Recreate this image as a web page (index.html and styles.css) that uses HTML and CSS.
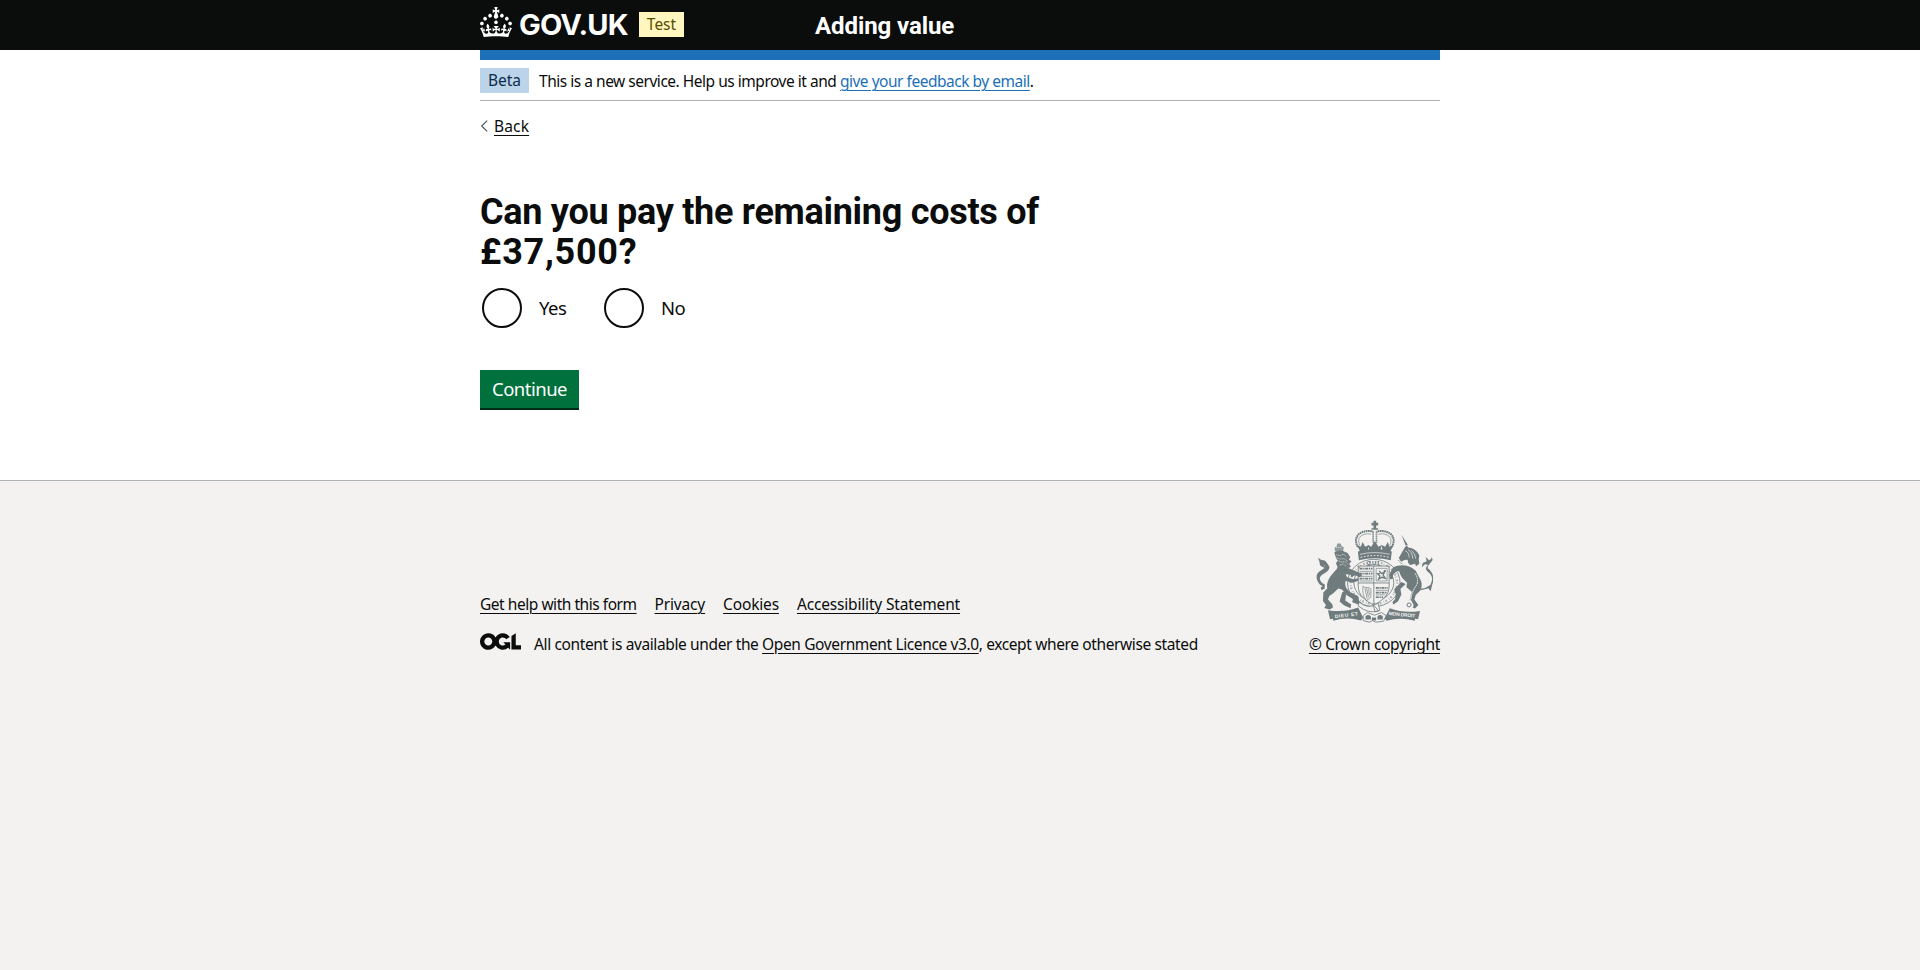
FILE: index.html
```html
<!DOCTYPE html>
<html lang="en">
<head>
<meta charset="utf-8">
<title>Can you pay the remaining costs of £37,500?</title>
<link rel="stylesheet" href="styles.css">
</head>
<body>
<header class="header">
  <div class="container header-row">
    <div class="header-logo">
      <svg class="crown" viewBox="0 0 32 30" width="32" height="30" aria-hidden="true"><path fill="#fff" d="M22.6 10.4c-1 .4-2-.1-2.4-1-.4-.9.1-2 1-2.4.9-.4 2 .1 2.4 1s-.1 2-1 2.4m-5.9 6.7c-.9.4-2-.1-2.4-1-.4-.9.1-2 1-2.4.9-.4 2 .1 2.4 1s-.1 2-1 2.4m10.8-3.7c-1 .4-2-.1-2.4-1-.4-.9.1-2 1-2.4.9-.4 2 .1 2.4 1s0 2-1 2.4m3.3 4.8c-1 .4-2-.1-2.4-1-.4-.9.1-2 1-2.4.9-.4 2 .1 2.4 1s-.1 2-1 2.4M17 4.7l2.3 1.2V2.5l-2.3.7-.2-.2.9-3h-3.4l.9 3-.2.2c-.1.1-2.3-.7-2.3-.7v3.4L15 4.7c.1.1.1.2.2.2l-1.3 4c-.1.2-.1.4-.1.6 0 1.1.8 2 1.9 2.2h.7c1-.2 1.9-1.1 1.9-2.1 0-.2 0-.4-.1-.6l-1.3-4c-.1-.2 0-.2.1-.3m-7.6 5.7c.9.4 2-.1 2.4-1 .4-.9-.1-2-1-2.4-.9-.4-2 .1-2.4 1s0 2 1 2.4m-5 3c.9.4 2-.1 2.4-1 .4-.9-.1-2-1-2.4-.9-.4-2 .1-2.4 1s.1 2 1 2.4m-3.2 4.8c.9.4 2-.1 2.4-1 .4-.9-.1-2-1-2.4-.9-.4-2 .1-2.4 1s0 2 1 2.4m14.8 11c4.4 0 8.6.3 12.3.8 1.1-4.5 2.4-7 3.7-8.8l-2.5-.9c.2 1.3.3 1.9 0 2.7-.4-.4-.8-1.1-1.1-2.3l-1.2 4c.7-.5 1.3-.8 2-.9-1.1 2.5-2.6 3.1-3.5 3-1.1-.2-1.7-1.2-1.5-2.1.3-1.2 1.5-1.5 2.1-.1 1.1-2.3-.8-3-2-2.3 1.9-1.9 2.1-3.5.6-5.6-2.1 1.6-2.1 3.2-1.2 5.5-1.2-1.4-3.2-.6-2.5 1.6.9-1.4 2.1-.5 1.9.8-.2 1.1-1.7 2.1-3.5 1.9-2.7-.2-2.9-2.1-2.9-3.6.7-.1 1.9.5 2.9 1.9l.4-4.3c-1.1 1.1-2.1 1.4-3.2 1.4.4-1.2 2.1-3 2.1-3h-5.4s1.7 1.9 2.1 3c-1.1 0-2.1-.2-3.2-1.4l.4 4.3c1-1.4 2.2-2 2.9-1.9-.1 1.5-.2 3.4-2.9 3.6-1.9.2-3.4-.8-3.5-1.9-.2-1.3 1-2.2 1.9-.8.7-2.3-1.2-3-2.5-1.6.9-2.2.9-3.9-1.2-5.5-1.5 2-1.3 3.7.6 5.6-1.2-.7-3.1 0-2 2.3.6-1.4 1.8-1.1 2.1.1.2.9-.3 1.9-1.5 2.1-.9.2-2.4-.5-3.5-3 .6 0 1.2.3 2 .9l-1.2-4c-.3 1.1-.7 1.9-1.1 2.3-.3-.8-.2-1.4 0-2.7l-2.9.9C1.3 23 2.6 25.5 3.7 30c3.7-.5 7.9-.8 12.3-.8"/></svg>
      <span class="wordmark">GOV.UK</span>
      <span class="tag tag-yellow">Test</span>
    </div>
    <div class="service-name">Adding value</div>
  </div>
</header>
<div class="page">
  <div class="container">
    <div class="blue-bar"></div>
    <div class="phase">
      <span class="tag tag-blue">Beta</span>
      <span class="phase-text">This is a new service. Help us improve it and <a class="link link-blue" href="#">give your feedback by email</a>.</span>
    </div>
    <a class="back" href="#"><svg class="chevron" viewBox="0 0 8 12" width="8" height="12" aria-hidden="true"><path d="M7.2 .6L1.7 6 7.2 11.4" fill="none" stroke="#505a5f" stroke-width="1.2"/></svg><span class="link back-text">Back</span></a>
    <main class="main">
      <h1 class="heading">Can you pay the remaining costs of <span class="amount">£37,500?</span></h1>
      <div class="radios">
        <label class="radio"><input class="radio-input" type="radio" name="pay"><span class="radio-label">Yes</span></label>
        <label class="radio"><input class="radio-input" type="radio" name="pay"><span class="radio-label">No</span></label>
      </div>
      <button class="button" type="button">Continue</button>
    </main>
  </div>
</div>
<footer class="footer">
  <div class="container footer-row">
    <div class="footer-meta">
      <div class="footer-links">
        <a class="link link-help" href="#">Get help with this form</a>
        <a class="link" href="#">Privacy</a>
        <a class="link" href="#">Cookies</a>
        <a class="link" href="#">Accessibility Statement</a>
      </div>
      <div class="licence">
        <svg class="ogl" viewBox="0 0 483.2 195.7" width="41" height="17" aria-hidden="true"><path fill="#0b0c0c" d="M421.5 142.8V.1l-50.7 32.3v161.1h112.4v-50.7zm-122.3-9.6A47.12 47.12 0 0 1 221 97.8c0-26 21.1-47.1 47.1-47.1 16.7 0 31.4 8.7 39.7 21.8l42.7-27.2A97.63 97.63 0 0 0 268.1 0c-36.5 0-68.3 20.1-85.1 49.7A98 98 0 0 0 97.8 0C43.9 0 0 43.9 0 97.8s43.9 97.8 97.8 97.8c36.5 0 68.3-20.1 85.1-49.7a97.76 97.76 0 0 0 149.6 25.4l19.4 22.2h3v-87.8h-80l24.3 27.5zM97.8 145c-26 0-47.1-21.1-47.1-47.1s21.1-47.1 47.1-47.1 47.1 21.1 47.1 47.1S123.8 145 97.8 145"/></svg>
        <span class="licence-text">All content is available under the <a class="link" href="#">Open Government Licence v3.0</a>, except where otherwise stated</span>
      </div>
    </div>
    <div class="copyright">
      <svg class="crest" viewBox="50 30 352 312" width="117" height="104" aria-hidden="true">
        <!-- crown -->
        <g class="ink">
          <path d="M223 32h8v6h6v8h-6v8h6v5h-20v-5h6v-8h-6v-8h6z"/>
          <path d="M176 124q51-14 102 0l-3 27q-48-12-96 0z"/>
          <path d="M184 128l-11-24 12 6 5-14 8 14 11-5-5 23zM212 125l-6-20 10 5 11-17 11 17 10-5-6 20zM252 128l-5-23 11 5 8-14 5 14 12-6-11 24z"/>
        </g>
        <g class="line">
          <path stroke-width="6" stroke-dasharray="5 1.5" d="M176 111c-9-15-8-34 9-43 17-8 30-6 36-3M278 111c9-15 8-34-9-43-17-8-30-6-36-3"/>
          <path stroke-width="2" d="M182 106c-6-13-5-24 7-31 12-5 21-5 27-2M272 106c6-13 5-24-7-31-12-5-21-5-27-2"/>
          <path stroke-width="5" stroke-dasharray="4 2" d="M222 64v36M232 64v36"/>
        </g>
        <path class="pale" stroke-width="3" stroke-dasharray="5 5" fill="none" d="M184 142q43-11 86 0"/>
        <path class="pale" stroke-width="2" fill="none" d="M182 133q45-11 90 0"/>
        <!-- garter and shield -->
        <g class="line" stroke-width="2.5">
          <ellipse cx="224" cy="219" rx="79" ry="71"/>
          <ellipse cx="224" cy="218" rx="60" ry="54"/>
          <path fill="#f3f2f1" d="M177 168h93v60c0 32-25 45-46 58-21-13-47-26-47-58z"/>
          <path d="M224 168v116M177 219h93"/>
        </g>
        <g class="line">
          <ellipse cx="224" cy="219" rx="70" ry="63" stroke-width="7" stroke-dasharray="2 7 5 4" opacity=".55"/>
          <path stroke-width="5" stroke-dasharray="9 2 4 2" d="M181 176h39M181 191h39M181 206h39M230 234h36M230 248h34M230 262h22"/>
          <path stroke-width="2" d="M181 184h39M181 199h39M181 213h39M230 241h36M230 255h28M231 175h33v38h-33z"/>
          <path stroke-width="4" d="M240 183l8 8 8-5-4 10 7 9-11-3-9 5 3-9-7-7 8-1M254 181l6 4M240 206l-4 3"/>
          <path stroke-width="2" d="M191 229c8 8 17 0 24 7v26l-13 10c-9-10-13-24-11-43zM197 235l7 31M202 234l6 28M208 236l3 20"/>
        </g>
        <text class="garter" x="202" y="165">QUI</text>
        <!-- lion -->
        <g class="ink">
          <path d="M107 124l-1-12 6-3 2-9h10l3 8 7 4-3 12z" opacity=".75"/>
          <path d="M105 127l10-5 15 0 15 7 8 12-4 8 8 5-7 7 5 10-8 3 22 10 12 4 8 9-8 5-13-6-11 5-3-7-15-1 5 10c-8 12-7 22-2 33l10 10 24 12 4 15 9 8-12 3-18-7 2-10-18-11-15-17-11-3-15 14-12 8-4 11 13 14 2 10-10 6-16-5 5-9-9-12 1-25 12-13c-4-18 8-37 28-57l3-7-5-11 5-8-5-9z"/>
          <path d="M134 198l28 10 15-3 1 7-18 6-28-7zM142 242l-4 30 18 12-2 11-20-9-13-11 8-28z"/>
          <path d="M75 231l-13-7c-10-10-13-25-8-33 7-10 22-14 28-23-8-1-18-4-21-11l-5-14 9 6c10 1 18 6 21 17l4 7c-1 15-25 18-28 29-2 9 5 19 15 22z"/>
          <path d="M60 157l18 12-4-20 13 16 4 7-9 5-19-10zM64 233l10-7 3 9-10 6z"/>
        </g>
        <path class="pale" stroke-width="2" stroke-dasharray="4 2" fill="none" d="M111 134l12 3 10-5 9 9M112 143l9 4 14-1 11 8M114 151l12 5 12-1 9 9M121 165l12-3 9 8M110 112h17"/>
        <!-- unicorn -->
        <g class="ink">
          <path d="M307 74l19 30-6 3zM299 144l11-20 8-13 6-5 3 6c15 0 29 11 34 25l-2 11 2 13-10 8-3-8-14 4c-7-3-8-10-8-16l-10 1-10 5z"/>
          <path d="M282 172c22-10 48-8 68 10l13 25c7 12 6 25 1 35l-14 13-4 14 12 16-10 11-7-3 3-7-9-17 4-23-17-14 2-14c-13-10-20-20-24-34l-8 0-10 10-1 13-8 1-3-13z"/>
          <path d="M320 222l-16 15 3 17-10 20-14 10-3-7 8-10 2-14-5-15 22-22z"/>
          <path d="M358 238l20-4 16-9c9-18 6-31-8-40-7-6-7-13 1-20l-9-2-10 9 3-13 12-5-3-14 10 11 7-5 1-6 3 10-7 9-7 8-1 8c17 12 21 31 14 48l-5 21-7-9-19 5z"/>
        </g>
        <g class="line">
          <path stroke-width="3" stroke-dasharray="4 2" d="M298 150q5 10 14 12M347 188q12 18 5 37-15 20-19 48"/>
          <circle cx="330" cy="285" r="6" stroke-width="3"/>
        </g>
        <path class="pale" stroke-width="2" fill="none" d="M318 122q13 5 12 20M327 119q14 8 14 27M337 121q12 10 13 25"/>
        <path class="pale" stroke-width="3" stroke-dasharray="5 2" fill="none" d="M348 190q12 18 5 35-15 20-18 45"/>
        <!-- buckle and motto ribbon -->
        <g class="line" stroke-width="2.5">
          <path fill="#f3f2f1" d="M180 276q20 19 45 11l13 16q-31 10-61-15zM222 286l15-6 5 22-14 4z"/>
          <path fill="#f3f2f1" d="M192 318l12-10 22 8 21-8 15 10-9 16-23 3-9-5-11 5-18-5z"/>
        </g>
        <g class="ink">
          <path d="M86 301q48 8 91-8l15 31-7 8q-42-13-83 1l-1-6-9 1zM363 303q-49 8-91-8l-16 31 7 7q41-13 84 0l1-6 9 1z"/>
          <path d="M199 319q8-8 16 0v10h-16zM235 319q8-8 16 0v10h-16zM218 323h13v9h-13z"/>
        </g>
        <text class="motto" transform="translate(107 325) rotate(-7)" textLength="70">DIEU ET</text>
        <text class="motto" transform="translate(268 315) rotate(6)" textLength="80">MON DROIT</text>
      </svg>
      <a class="link" href="#">© Crown copyright</a>
    </div>
  </div>
</footer>
</body>
</html>
```
FILE: styles.css
```css
* { box-sizing: border-box; }
body { margin: 0; background: #f3f2f1; color: #0b0c0c; font-family: "Noto Sans", sans-serif; font-size: 15.5px; line-height: 20px; }
.page { background: #fff; }
.container { width: 960px; margin: 0 auto; }
.header { height: 50px; background: #0b0c0c; color: #fff; }
.header-row { display: flex; }
.header-logo { width: 335px; display: flex; align-items: flex-start; }
.crown { margin-top: 7px; }
.wordmark { margin: 9px 0 0 7px; width: 120px; font: 700 29px/32px Inter, sans-serif; letter-spacing: -0.8px; white-space: nowrap; }
.service-name { padding-top: 11px; font: 700 24px/30px Roboto, sans-serif; letter-spacing: -0.08px; }
.tag { height: 25px; padding: 2px 0 3px; line-height: 20px; text-align: center; }
.tag-yellow { width: 45px; margin-top: 12px; background: #fff7bf; color: #594d00; }
.tag-blue { width: 49px; background: #bbd4ea; color: #0c2d4a; }
.link { color: inherit; text-decoration: underline; text-decoration-thickness: 1px; text-underline-offset: 3px; }
.link-blue { color: #1d70b8; letter-spacing: -0.48px; }
.blue-bar { height: 10px; background: #1d70b8; }
.phase { display: flex; gap: 10px; height: 41px; padding: 8px 0 7px; border-bottom: 1px solid #b1b4b6; align-items: flex-start; }
.phase-text { padding-top: 3px; letter-spacing: -0.48px; }
.back { display: flex; align-items: center; margin-top: 15px; height: 20px; color: inherit; text-decoration: none; }
.chevron { margin: 0 6px 0 0; }
.back-text { letter-spacing: 0.15px; }
.main { padding: 56px 0 72px; }
.heading { margin: 0; width: 600px; font: 700 36px/40px Roboto, sans-serif; letter-spacing: -0.28px; }
.amount { letter-spacing: 0.75px; }
.radios { display: flex; margin-top: 16px; }
.radio { display: flex; align-items: center; }
.radio-input { appearance: none; width: 40px; height: 40px; margin: 0 17px 0 2px; border: 2px solid #0b0c0c; border-radius: 50%; }
.radio-label { width: 63px; padding-bottom: 1px; font-size: 18.5px; line-height: 25px; letter-spacing: -0.5px; }
.button { display: block; margin-top: 42px; width: 99px; height: 38px; padding: 0 0 2px; border: 0; background: #00703c; box-shadow: 0 2px 0 #002d18; color: #fff; font: 400 18.5px/19px "Noto Sans", sans-serif; letter-spacing: -0.5px; }
.footer { border-top: 1px solid #b1b4b6; padding: 39px 0 25px; }
.footer-row { display: flex; justify-content: space-between; align-items: flex-end; }
.footer-links { display: flex; gap: 18px; margin-bottom: 19px; letter-spacing: -0.17px; }
.link-help { letter-spacing: -0.46px; }
.licence { display: flex; gap: 13px; }
.licence-text { padding-top: 1px; letter-spacing: -0.38px; white-space: nowrap; }
.copyright { display: flex; flex-direction: column; align-items: center; gap: 10px; letter-spacing: -0.33px; }
.crest { display: block; }
.ink { fill: #6f7b7d; }
.line { fill: none; stroke: #6f7b7d; }
.pale { stroke: #f3f2f1; }
.garter { fill: #6f7b7d; font: 700 17px "Noto Sans", sans-serif; letter-spacing: 3px; }
.motto { fill: #f3f2f1; font: 700 15px "Liberation Sans", sans-serif; }
```
